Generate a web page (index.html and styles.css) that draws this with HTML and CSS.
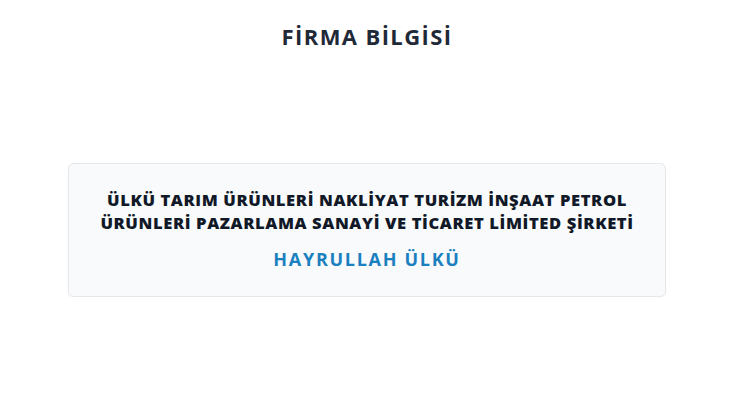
FILE: index.html
```html
<!DOCTYPE html>
<html lang="tr">
<head>
<meta charset="utf-8">
<link rel="stylesheet" href="styles.css">
</head>
<body>
<main class="page">
  <h1 class="title">FİRMA BİLGİSİ</h1>
  <section class="card">
    <p class="company">ÜLKÜ TARIM ÜRÜNLERİ NAKLİYAT TURİZM İNŞAAT PETROL ÜRÜNLERİ PAZARLAMA SANAYİ VE TİCARET LİMİTED ŞİRKETİ</p>
    <p class="owner">HAYRULLAH ÜLKÜ</p>
  </section>
</main>
</body>
</html>
```
FILE: styles.css
```css
html, body {
  margin: 0;
  padding: 0;
  background: #ffffff;
}
body {
  font-family: "Open Sans", "Noto Sans", sans-serif;
  width: 734px;
}
.page {
  display: flex;
  flex-direction: column;
  align-items: center;
  padding-top: 21px;
}
.title {
  margin: 0;
  font-size: 22px;
  font-weight: 700;
  color: #1f2937;
  line-height: 30px;
  letter-spacing: 1.4px;
}
.card {
  margin-top: 112px;
  width: 598px;
  box-sizing: border-box;
  border: 1px solid #e5e7eb;
  border-radius: 6px;
  background: #f8fafc;
  box-shadow: 0 1px 2px rgba(0,0,0,0.04);
  padding: 24px 20px 24px;
  text-align: center;
}
.company {
  margin: 0;
  font-size: 16.6px;
  font-weight: 800;
  line-height: 23px;
  color: #111827;
  letter-spacing: 0.6px;
}
.owner {
  margin: 12px 0 0;
  font-size: 18px;
  font-weight: 700;
  line-height: 26px;
  color: #1b80c0;
  letter-spacing: 1.7px;
}
```
